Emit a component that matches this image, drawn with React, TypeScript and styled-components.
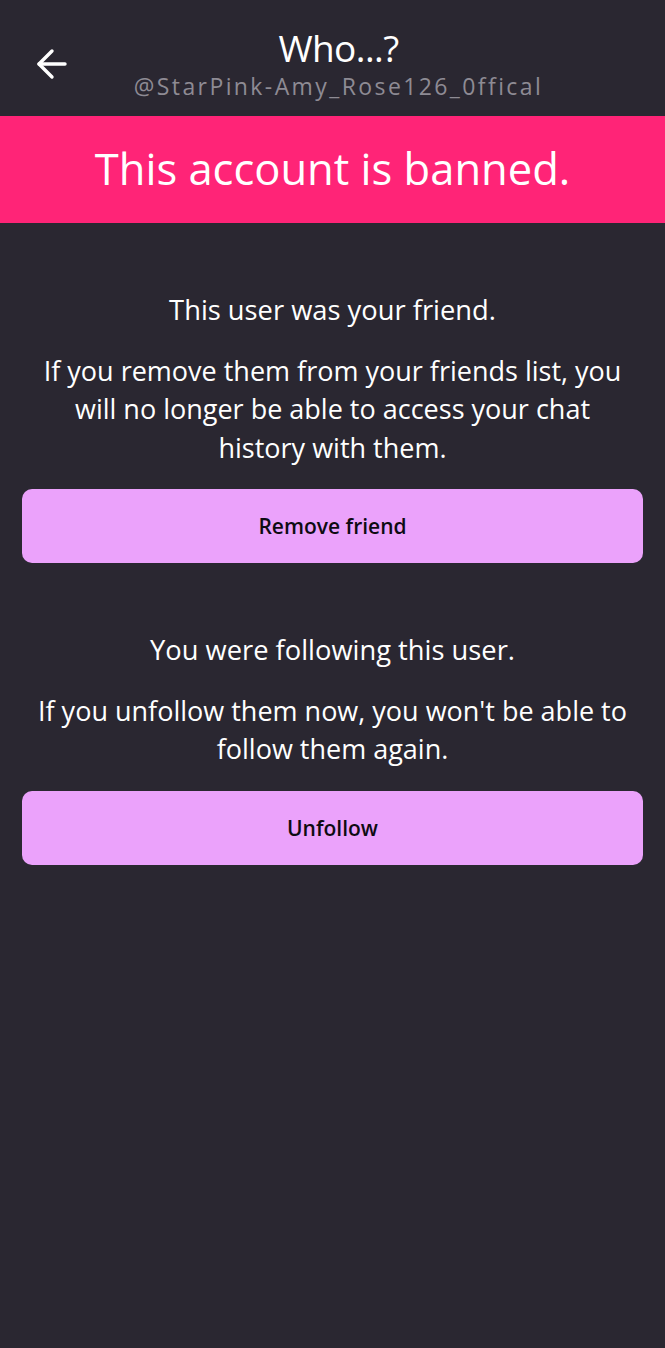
import React from "react";
import styled, { createGlobalStyle } from "styled-components";

const Global = createGlobalStyle`
  html, body { margin: 0; padding: 0; background: #2a2731; }
  body { font-family: "Open Sans", "Noto Sans", sans-serif; -webkit-font-smoothing: antialiased; }
  * { box-sizing: border-box; }
`;

const Screen = styled.div`
  width: 665px;
  min-height: 1348px;
  background: #2a2731;
  color: #ffffff;
  display: flex;
  flex-direction: column;
`;

const Header = styled.header`
  height: 116px;
  display: grid;
  grid-template-columns: 104px 1fr 92px;
  align-items: start;
`;

const BackButton = styled.button`
  background: none;
  border: none;
  padding: 0;
  margin: 48px 0 0;
  width: 104px;
  height: 32px;
  display: flex;
  align-items: center;
  justify-content: center;
  color: #ffffff;
  cursor: pointer;
`;

const TitleBlock = styled.div`
  display: flex;
  flex-direction: column;
  align-items: center;
  padding-top: 28px;
`;

const Title = styled.h1`
  margin: 0;
  font-size: 37px;
  font-weight: 400;
  line-height: 40px;
  letter-spacing: -0.6px;
  color: #ffffff;
`;

const Handle = styled.div`
  margin-top: 3px;
  font-size: 23px;
  line-height: 30px;
  letter-spacing: 2.4px;
  color: #8e8b94;
  white-space: nowrap;
`;

const Banner = styled.div`
  height: 107px;
  background: #ff2477;
  display: flex;
  align-items: center;
  justify-content: center;
  font-size: 43.5px;
  font-weight: 400;
  color: #ffffff;
  padding-bottom: 2px;
`;

const Content = styled.main`
  display: flex;
  flex-direction: column;
  padding: 68px 22px 0;
`;

const Section = styled.section<{ $gap?: number }>`
  display: flex;
  flex-direction: column;
  align-items: stretch;
  margin-bottom: ${(p) => p.$gap ?? 0}px;
`;

const Lead = styled.p`
  margin: 0 0 22px;
  text-align: center;
  font-size: 27.3px;
  line-height: 38.5px;
  color: #ffffff;
`;

const Body = styled.p`
  margin: 0 0 22px;
  padding: 0 10px;
  text-align: center;
  font-size: 27px;
  line-height: 38.5px;
  color: #ffffff;
`;

const ActionButton = styled.button`
  height: 74px;
  width: 100%;
  border: none;
  border-radius: 10px;
  background: #eba2fb;
  color: #0e0b12;
  font-family: "Open Sans", "Noto Sans", sans-serif;
  font-size: 21px;
  font-weight: 600;
  cursor: pointer;
`;

const ArrowIcon = () => (
  <svg width="32" height="32" viewBox="0 0 32 32" fill="none" stroke="currentColor" strokeWidth="3.4" strokeLinecap="round" strokeLinejoin="round">
    <path d="M29 16H3" />
    <path d="M16 3L3 16L16 29" />
  </svg>
);

export default function App() {
  return (
    <Screen>
      <Global />
      <Header>
        <BackButton aria-label="Back">
          <ArrowIcon />
        </BackButton>
        <TitleBlock>
          <Title>Who...?</Title>
          <Handle>@StarPink-Amy_Rose126_0ffical</Handle>
        </TitleBlock>
        <div />
      </Header>
      <Banner>This account is banned.</Banner>
      <Content>
        <Section $gap={68}>
          <Lead>This user was your friend.</Lead>
          <Body>
            If you remove them from your friends list, you will no longer be able to access your chat history with them.
          </Body>
          <ActionButton>Remove friend</ActionButton>
        </Section>
        <Section>
          <Lead>You were following this user.</Lead>
          <Body>If you unfollow them now, you won't be able to follow them again.</Body>
          <ActionButton>Unfollow</ActionButton>
        </Section>
      </Content>
    </Screen>
  );
}
